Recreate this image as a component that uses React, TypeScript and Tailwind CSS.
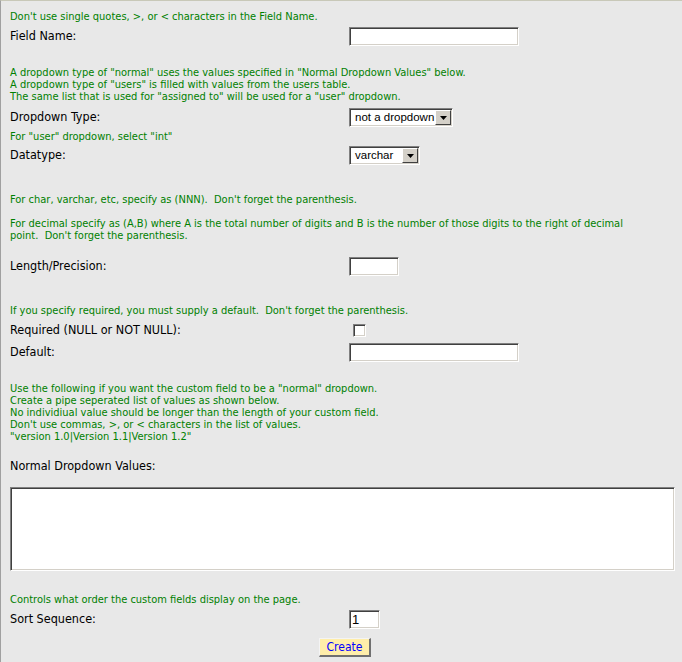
import React from "react";

const inset =
  "bg-white border border-t-[#808080] border-l-[#808080] border-b-white border-r-white shadow-[inset_1px_1px_0_#404040,inset_-1px_-1px_0_#d4d0c8]";

function Note({ lines, className = "" }: { lines: string[]; className?: string }) {
  return (
    <div className={`text-[11px] leading-[12px] text-[#008000] ${className}`}>
      {lines.map((l, i) => (
        <div key={i} className="whitespace-pre">
          {l}
        </div>
      ))}
    </div>
  );
}

function Row({ label, children, className = "" }: { label: string; children?: React.ReactNode; className?: string }) {
  return (
    <div className={`flex items-center h-[19px] ${className}`}>
      <div className="w-[339px] text-[12.5px] text-black">{label}</div>
      {children}
    </div>
  );
}

function Select({ value, width }: { value: string; width: string }) {
  return (
    <div className={`${inset} ${width} h-full flex items-center pl-[5px] pr-[1px]`}>
      <span className="flex-1 whitespace-nowrap text-[11.5px] font-['Liberation_Sans',Arial,sans-serif]">{value}</span>
      <span className="w-[16px] h-[15px] bg-[#d4d0c8] border border-t-white border-l-white border-b-[#404040] border-r-[#404040] flex items-center justify-center">
        <svg width="7" height="4" viewBox="0 0 7 4">
          <path d="M0 0h7L3.5 4z" fill="#000" />
        </svg>
      </span>
    </div>
  );
}

export default function App() {
  return (
    <div className="min-h-[662px] bg-[#e8e8e8] border-t border-t-[#c8c8b8] border-l border-l-[#a0a0a0] pl-[9px] pt-[10px] font-['DejaVu_Sans_Condensed','DejaVu_Sans',sans-serif]">
      <Note lines={["Don't use single quotes, >, or < characters in the Field Name."]} />
      <Row label="Field Name:" className="mt-[4px]">
        <div className={`${inset} w-[170px] h-full`} />
      </Row>

      <Note
        className="mt-[21px]"
        lines={[
          'A dropdown type of "normal" uses the values specified in "Normal Dropdown Values" below.',
          'A dropdown type of "users" is filled with values from the users table.',
          'The same list that is used for "assigned to" will be used for a "user" dropdown.',
        ]}
      />
      <Row label="Dropdown Type:" className="mt-[5px]">
        <Select value="not a dropdown" width="w-[104px]" />
      </Row>

      <Note className="mt-[4px]" lines={['For "user" dropdown, select "int"']} />
      <Row label="Datatype:" className="mt-[3px]">
        <Select value="varchar" width="w-[71px]" />
      </Row>

      <Note className="mt-[29px]" lines={["For char, varchar, etc, specify as (NNN).  Don't forget the parenthesis."]} />
      <Note
        className="mt-[12px]"
        lines={[
          "For decimal specify as (A,B) where A is the total number of digits and B is the number of those digits to the right of decimal",
          "point.  Don't forget the parenthesis.",
        ]}
      />
      <Row label="Length/Precision:" className="mt-[15px]">
        <div className={`${inset} w-[50px] h-full`} />
      </Row>

      <Note className="mt-[29px]" lines={["If you specify required, you must supply a default.  Don't forget the parenthesis."]} />
      <Row label="Required (NULL or NOT NULL):" className="mt-[4px]">
        <div className={`${inset} w-[13px] h-[13px] ml-[4px]`} />
      </Row>
      <Row label="Default:" className="mt-[3px]">
        <div className={`${inset} w-[170px] h-full`} />
      </Row>

      <Note
        className="mt-[21px]"
        lines={[
          'Use the following if you want the custom field to be a "normal" dropdown.',
          "Create a pipe seperated list of values as shown below.",
          "No individiual value should be longer than the length of your custom field.",
          "Don't use commas, >, or < characters in the list of values.",
          '"version 1.0|Version 1.1|Version 1.2"',
        ]}
      />
      <Row label="Normal Dropdown Values:" className="mt-[14px]" />
      <div className={`${inset} w-[665px] h-[84px] mt-[11px]`} />

      <Note className="mt-[23px]" lines={["Controls what order the custom fields display on the page."]} />
      <Row label="Sort Sequence:" className="mt-[4px]">
        <div className={`${inset} w-[31px] h-full flex items-center pl-[2px] text-[13px] font-['Liberation_Sans',Arial,sans-serif]`}>
          1
        </div>
      </Row>
      <div className="mt-[9px] flex pl-[309px]">
        <button className="w-[52px] h-[19px] bg-[#ffeeaa] text-[#0000ff] text-[12px] leading-none border-t border-l border-t-[#f4f4f4] border-l-[#f4f4f4] border-b-2 border-r-2 border-b-[#707070] border-r-[#707070]">
          Create
        </button>
      </div>
    </div>
  );
}
